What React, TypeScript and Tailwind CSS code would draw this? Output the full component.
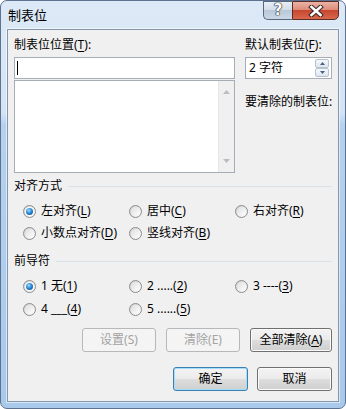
import React from "react";

const U = ({ children }: { children: React.ReactNode }) => (
  <span className="underline underline-offset-[2px] decoration-[1px]">{children}</span>
);

function Radio({ checked }: { checked?: boolean }) {
  return (
    <span className="w-[13px] h-[13px] rounded-full border border-[#8d8d8d] bg-[linear-gradient(135deg,#cfcfcf,#fdfdfd)] flex items-center justify-center shrink-0">
      {checked ? (
        <span className="w-[9px] h-[9px] rounded-full bg-white flex items-center justify-center">
          <span className="w-[7px] h-[7px] rounded-full bg-[radial-gradient(circle_at_40%_35%,#a6dcff_0%,#2a8ad8_45%,#0c3f78_100%)]" />
        </span>
      ) : (
        <span className="w-[9px] h-[9px] rounded-full bg-[linear-gradient(135deg,#dedede,#ffffff)]" />
      )}
    </span>
  );
}

function RadioItem({ checked, children }: { checked?: boolean; children: React.ReactNode }) {
  return (
    <div className="flex items-center gap-[5px] h-[16px]">
      <Radio checked={checked} />
      <span className="leading-[16px] whitespace-nowrap">{children}</span>
    </div>
  );
}

function GroupHeader({ children }: { children: React.ReactNode }) {
  return (
    <div className="flex items-center gap-[6px] h-[16px]">
      <span className="leading-[16px] whitespace-nowrap">{children}</span>
      <div className="flex-1 h-px bg-[#d8e0e8]" />
    </div>
  );
}

function Btn({
  children,
  disabled,
  primary,
  w,
}: {
  children: React.ReactNode;
  disabled?: boolean;
  primary?: boolean;
  w: string;
}) {
  if (disabled) {
    return (
      <div className={`${w} h-[24px] rounded-[3px] border border-[#b5b9bc] bg-[#f4f4f4] text-[#a3a3a3] flex items-center justify-center leading-[16px]`}>
        {children}
      </div>
    );
  }
  return (
    <div
      className={`${w} h-[24px] rounded-[3px] border ${
        primary
          ? "border-[#3c7fb1] shadow-[inset_0_0_0_1px_#a3defa]"
          : "border-[#707070] shadow-[inset_0_0_0_1px_#fbfbfb]"
      } bg-[linear-gradient(180deg,#f3f3f3_0%,#ebebeb_50%,#dddddd_51%,#cfcfcf_100%)] text-black flex items-center justify-center leading-[16px]`}
    >
      {children}
    </div>
  );
}

export default function App() {
  return (
    <div className="w-[346px] h-[409px] rounded-[7px] border border-[#5d7290] bg-[linear-gradient(180deg,#dde9f6_0px,#d4e4f4_112px,#b5d1ee_124px,#a9c9eb_409px)] font-['Noto_Sans','Noto_Sans_CJK_SC',sans-serif] text-[12px] text-black overflow-hidden">
      {/* Title bar */}
      <div className="flex h-[28px]">
        <span className="pl-[7px] pt-[6px] text-[13px] leading-[17px]">制表位</span>
        <div className="ml-auto mr-[6px] flex self-start">
          <div className="w-[29px] h-[19px] border border-r-0 border-[#58687d] rounded-bl-[5px] bg-[linear-gradient(180deg,#e8eef5_0%,#d4dfea_45%,#b9c9da_50%,#cbd8e6_100%)] flex items-center justify-center">
            <span className="text-white font-bold text-[15px] leading-[15px] font-['DejaVu_Sans',sans-serif] [text-shadow:0_0_1px_#333,0_0_1px_#333,0_0_1px_#333,0_0_1px_#333]">
              ?
            </span>
          </div>
          <div className="w-[47px] h-[19px] border border-[#5b2d25] rounded-br-[5px] bg-[linear-gradient(180deg,#eab2a4_0%,#df8c7a_45%,#c8472f_50%,#d8674e_100%)] flex items-center justify-center">
            <svg width="16" height="12" viewBox="0 0 16 12">
              <path d="M3.5 2 L12.5 10 M12.5 2 L3.5 10" stroke="#3a2a28" strokeWidth="4.6" strokeLinecap="square" />
              <path d="M3.5 2 L12.5 10 M12.5 2 L3.5 10" stroke="#ffffff" strokeWidth="2.6" strokeLinecap="square" />
            </svg>
          </div>
        </div>
      </div>

      {/* Client area */}
      <div className="ml-[6px] w-[332px] h-[373px] border border-[#8396ad] shadow-[0_0_0_1px_rgba(255,255,255,0.55)] bg-[#f0f0f0] px-[6px] flex flex-col">
        <div className="grid grid-cols-[221px_87px] gap-x-[10px] pt-[7px]">
          {/* Left column */}
          <div className="flex flex-col">
            <div className="leading-[16px] h-[16px]">
              制表位位置(<U>T</U>):
            </div>
            <div className="mt-[4px] h-[22px] border border-[#a7adb6] bg-white flex items-center pl-[2px]">
              <div className="w-px h-[14px] bg-black" />
            </div>
            <div className="mt-px h-[93px] border border-[#a7adb6] bg-white flex">
              <div className="flex-1" />
              <div className="w-[16px] bg-[#f0f0f0] border-l border-[#e6e6e6] flex flex-col items-center justify-between py-[9px]">
                <svg width="7" height="4" viewBox="0 0 7 4">
                  <path d="M0 4 L3.5 0 L7 4 Z" fill="#bcbcbc" />
                </svg>
                <svg width="7" height="4" viewBox="0 0 7 4">
                  <path d="M0 0 L7 0 L3.5 4 Z" fill="#bcbcbc" />
                </svg>
              </div>
            </div>
          </div>
          {/* Right column */}
          <div className="flex flex-col">
            <div className="leading-[16px] h-[16px] whitespace-nowrap">
              默认制表位(<U>F</U>):
            </div>
            <div className="mt-[4px] h-[22px] border border-[#a7adb6] bg-white flex items-center pl-[3px] pr-[2px]">
              <span className="leading-[16px]">2 字符</span>
              <div className="ml-auto flex flex-col">
                <div className="w-[14px] h-[9px] border border-[#b5c2d2] rounded-[2px] bg-[linear-gradient(180deg,#f6f8fb,#dfe6ee)] flex items-center justify-center">
                  <svg width="5" height="3" viewBox="0 0 5 3">
                    <path d="M0 3 L2.5 0 L5 3 Z" fill="#4a5f86" />
                  </svg>
                </div>
                <div className="w-[14px] h-[9px] border border-[#b5c2d2] rounded-[2px] bg-[linear-gradient(180deg,#f6f8fb,#dfe6ee)] flex items-center justify-center">
                  <svg width="5" height="3" viewBox="0 0 5 3">
                    <path d="M0 0 L5 0 L2.5 3 Z" fill="#4a5f86" />
                  </svg>
                </div>
              </div>
            </div>
            <div className="mt-[15px] leading-[16px] h-[16px] whitespace-nowrap">要清除的制表位:</div>
          </div>
        </div>

        {/* 对齐方式 */}
        <div className="mt-[5px]">
          <GroupHeader>对齐方式</GroupHeader>
        </div>
        <div className="mt-[9px] pl-[9px] grid grid-cols-[106px_106px_1fr] gap-y-[6px]">
          <RadioItem checked>
            左对齐(<U>L</U>)
          </RadioItem>
          <RadioItem>
            居中(<U>C</U>)
          </RadioItem>
          <RadioItem>
            右对齐(<U>R</U>)
          </RadioItem>
          <RadioItem>
            小数点对齐(<U>D</U>)
          </RadioItem>
          <RadioItem>
            竖线对齐(<U>B</U>)
          </RadioItem>
        </div>

        {/* 前导符 */}
        <div className="mt-[12px]">
          <GroupHeader>前导符</GroupHeader>
        </div>
        <div className="mt-[9px] pl-[9px] grid grid-cols-[106px_106px_1fr] gap-y-[7px]">
          <RadioItem checked>
            1 无(<U>1</U>)
          </RadioItem>
          <RadioItem>
            2 .....(<U>2</U>)
          </RadioItem>
          <RadioItem>
            3 ----(<U>3</U>)
          </RadioItem>
          <RadioItem>
            4 ___(<U>4</U>)
          </RadioItem>
          <RadioItem>
            5 ......(<U>5</U>)
          </RadioItem>
        </div>

        {/* Buttons */}
        <div className="mt-[11px] flex justify-end gap-[10px]">
          <Btn disabled w="w-[74px]">设置(S)</Btn>
          <Btn disabled w="w-[74px]">清除(E)</Btn>
          <Btn w="w-[82px]">
            全部清除(<U>A</U>)
          </Btn>
        </div>
        <div className="mt-[15px] flex justify-end gap-[9px]">
          <Btn primary w="w-[75px]">
            确定
          </Btn>
          <Btn w="w-[75px]">取消</Btn>
        </div>
      </div>
    </div>
  );
}
